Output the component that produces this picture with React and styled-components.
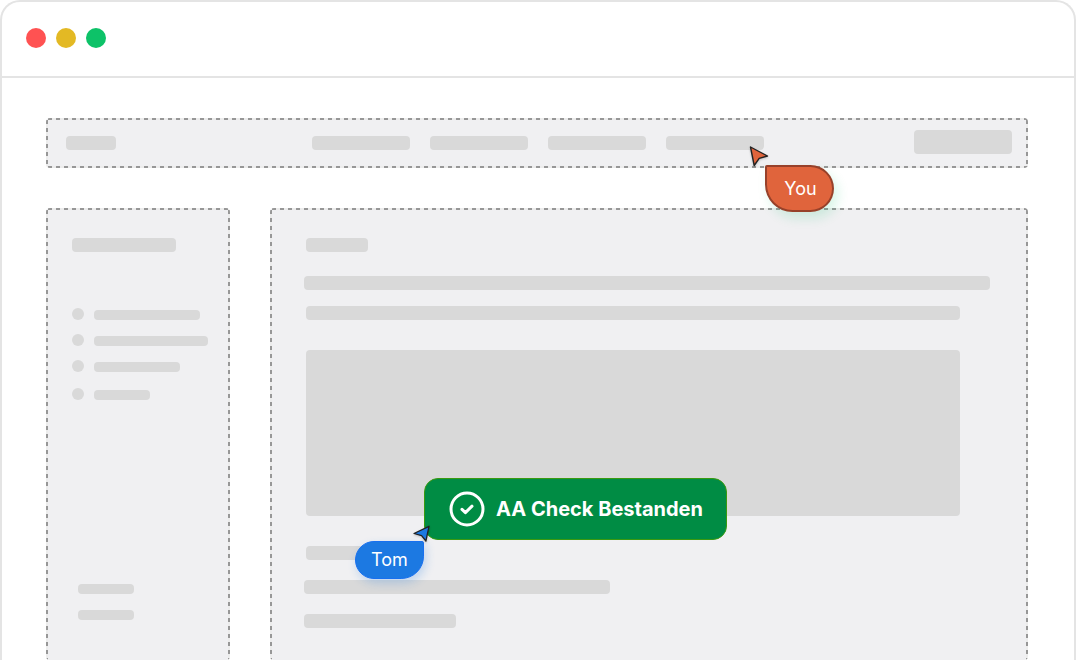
import React from 'react';
import styled, { createGlobalStyle } from 'styled-components';

const COLOR = {
  white: '#ffffff',
  frame: '#e4e4e4',
  panel: '#f0f0f2',
  bone: '#d9d9d9',
  dash: '#979797',
  dashGap: '#ececec',
  red: '#ff5252',
  yellow: '#e3b924',
  green: '#0dc268',
  success: '#008c44',
  successBorder: '#3a9a10',
  orange: '#e0643c',
  orangeBorder: '#97412a',
  blue: '#1c79e2',
  blueBorder: '#1870f0',
};

const GlobalStyle = createGlobalStyle`
  * {
    box-sizing: border-box;
  }

  body {
    margin: 0;
    background: ${COLOR.white};
    font-family: Inter, 'Liberation Sans', sans-serif;
    overflow: hidden;
  }
`;

const Browser = styled.div`
  display: flex;
  flex-direction: column;
  height: 100vh;
  border: 2px solid ${COLOR.frame};
  border-bottom: 0;
  border-radius: 20px 20px 0 0;
  overflow: hidden;
`;

const TitleBar = styled.header`
  display: flex;
  align-items: center;
  gap: 10px;
  flex: none;
  height: 76px;
  padding: 0 24px 2px;
  border-bottom: 2px solid ${COLOR.frame};
`;

const Light = styled.span`
  width: 20px;
  height: 20px;
  border-radius: 50%;
  background: ${props => props.$color};
`;

const Page = styled.main`
  position: relative;
  display: grid;
  grid-template: 50px 1fr / 184px 1fr;
  gap: 40px;
  flex: 1;
  min-height: 0;
  padding: 40px 46px 0 44px;
`;

const rule = angle => `repeating-linear-gradient(${angle}, ${COLOR.dash} 0 4px, ${COLOR.dashGap} 4px 8px)`;

const Panel = styled.section`
  border-radius: 4px;
  background:
    ${rule('90deg')} 2px 0 / 100% 2px no-repeat,
    ${props => (props.$open ? '' : `${rule('90deg')} 2px 100% / 100% 2px no-repeat,`)}
    ${rule('180deg')} 0 2px / 2px 100% no-repeat,
    ${rule('180deg')} 100% 2px / 2px 100% no-repeat,
    ${COLOR.panel};
`;

const Navigation = styled(Panel)`
  grid-column: 1 / -1;
  display: flex;
  align-items: center;
  justify-content: space-between;
  padding: 0 16px 2px 20px;
`;

const Links = styled.div`
  display: flex;
  gap: 20px;
  padding: 2px 0 0 46px;
`;

const Sidebar = styled(Panel)`
  padding: 30px 20px 0 26px;
`;

const Article = styled(Panel)`
  padding: 30px 38px 0 34px;
`;

const Bone = styled.div`
  flex: none;
  width: ${props => props.$width};
  max-width: 100%;
  height: ${props => props.$height || 14}px;
  margin-top: ${props => props.$top || 0}px;
  margin-left: ${props => props.$left || 0}px;
  border-radius: 4px;
  background: ${COLOR.bone};
`;

const Items = styled.ul`
  display: grid;
  gap: 14px;
  margin: 56px 0 0;
  padding: 0;
  list-style: none;
`;

const Item = styled.li`
  display: flex;
  align-items: center;
  gap: 10px;

  &:last-child {
    padding-top: 2px;
  }
`;

const Bullet = styled.span`
  flex: none;
  width: 12px;
  height: 12px;
  border-radius: 50%;
  background: ${COLOR.bone};
`;

const Toast = styled.div`
  position: absolute;
  top: 400px;
  left: 422px;
  display: flex;
  align-items: center;
  gap: 10px;
  height: 62px;
  padding: 0 23px;
  border: 1px solid ${COLOR.successBorder};
  border-radius: 14px;
  background: ${COLOR.success};
  color: ${COLOR.white};
  font-size: 20px;
  font-weight: 700;
  line-height: 24px;
  white-space: nowrap;
`;

const Tag = styled.div`
  position: absolute;
  top: ${props => props.$y}px;
  left: ${props => props.$x}px;
  display: flex;
  align-items: center;
  justify-content: center;
  width: 69px;
  color: ${COLOR.white};
  font-size: 18px;
  line-height: 24px;
`;

const YouTag = styled(Tag)`
  height: 47px;
  padding-left: 2px;
  border: 2px solid ${COLOR.orangeBorder};
  border-radius: 2px 24px 24px 28px;
  background: ${COLOR.orange};
  box-shadow: 4px 6px 12px rgba(13, 194, 104, 0.16);
`;

const TomTag = styled(Tag)`
  height: 38px;
  border: 1px solid ${COLOR.blueBorder};
  border-radius: 20px 2px 24px 20px;
  background: ${COLOR.blue};
  box-shadow: 2px 4px 10px rgba(28, 121, 226, 0.24);
`;

const Pointer = styled.svg`
  position: absolute;
  top: ${props => props.$y}px;
  left: ${props => props.$x}px;
  filter: drop-shadow(0 1px 1px rgba(0, 0, 0, 0.2));
`;

const LINKS = [98, 98, 98, 98];
const ITEMS = [106, 114, 86, 56];

const CheckIcon = () => (
  <svg width="38" height="38" viewBox="0 0 38 38" fill="none" stroke="#fff" aria-hidden="true">
    <circle cx="19" cy="19" r="16" strokeWidth="3" />
    <path d="M14 19.4L17.4 22.6L24 16.2" strokeWidth="3" strokeLinecap="round" strokeLinejoin="round" />
  </svg>
);

const App = () => (
  <>
    <GlobalStyle />
    <Browser>
      <TitleBar>
        <Light $color={COLOR.red} />
        <Light $color={COLOR.yellow} />
        <Light $color={COLOR.green} />
      </TitleBar>
      <Page>
        <Navigation>
          <Bone $width="50px" $top={2} />
          <Links>
            {LINKS.map((width, index) => <Bone key={index} $width={`${width}px`} />)}
          </Links>
          <Bone $width="98px" $height={24} />
        </Navigation>
        <Sidebar $open>
          <Bone $width="104px" />
          <Items>
            {ITEMS.map(width => (
              <Item key={width}>
                <Bullet />
                <Bone $width={`${width}px`} $height={10} $top={2} />
              </Item>
            ))}
          </Items>
          <Bone $width="56px" $height={10} $top={184} $left={6} />
          <Bone $width="56px" $height={10} $top={16} $left={6} />
        </Sidebar>
        <Article $open>
          <Bone $width="62px" $left={2} />
          <Bone $width="100%" $top={24} />
          <Bone $width="calc(100% - 32px)" $top={16} $left={2} />
          <Bone $width="calc(100% - 32px)" $height={166} $top={30} $left={2} />
          <Bone $width="62px" $top={30} $left={2} />
          <Bone $width="306px" $top={20} />
          <Bone $width="152px" $top={20} />
        </Article>

        <YouTag $x={763} $y={87}>You</YouTag>
        <Pointer $x={746} $y={66} width="22" height="24" viewBox="0 0 22 24" aria-hidden="true">
          <path d="M2.5 3L19.5 12L11.2 14.4L6.2 21.5Z" fill={COLOR.orange} stroke="#222" strokeWidth="1.4" strokeLinejoin="round" />
        </Pointer>

        <Toast role="status">
          <CheckIcon />
          AA Check Bestanden
        </Toast>

        <TomTag $x={353} $y={463}>Tom</TomTag>
        <Pointer $x={410} $y={446} width="20" height="20" viewBox="0 0 20 20" aria-hidden="true">
          <path d="M2 9.5L17 2.3L13.9 17L9.6 11.7Z" fill={COLOR.blue} stroke="#222" strokeWidth="1.3" strokeLinejoin="round" />
        </Pointer>
      </Page>
    </Browser>
  </>
);

export default App;
